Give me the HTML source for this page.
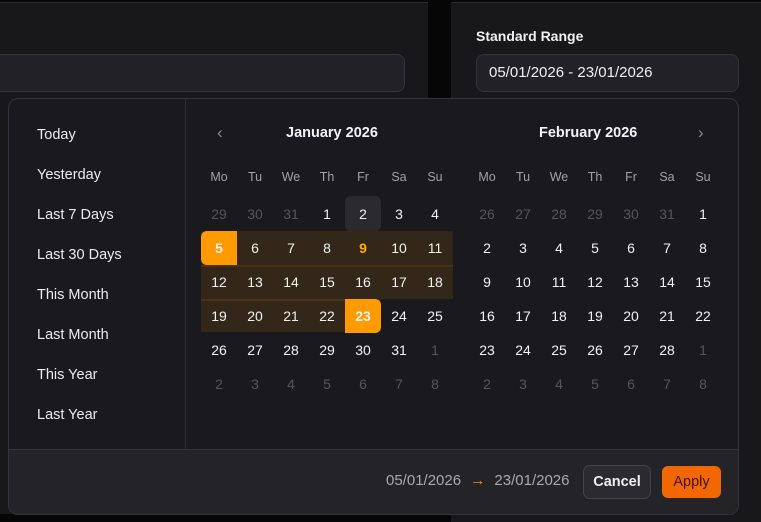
<!DOCTYPE html>
<html><head><meta charset="utf-8"><style>
*{box-sizing:border-box;margin:0;padding:0}
body{width:761px;height:522px;background:#060607;font-family:"Liberation Sans",sans-serif;position:relative;overflow:hidden;color:#f2f2f3}
.card{position:absolute;background:#18181b;border-top:1px solid #2a2a2e}
.inp{position:absolute;background:#212126;border:1px solid #34343a;border-radius:8px;height:38px;font-size:15px;line-height:36px;padding-left:12px;color:#f0f0f0}
.pop{position:absolute;left:8px;top:98px;width:731px;height:417px;background:#1a1a1e;border:1px solid #34343a;border-radius:10px;overflow:hidden}
.side{position:absolute;left:0;top:0;width:177px;height:350px;border-right:1px solid #2f2f35}
.side div{position:absolute;left:28px;font-size:14.5px;color:#ececee}
.foot{position:absolute;left:0;top:350px;width:100%;height:67px;background:#232328;border-top:1px solid #34343a}
.g{position:absolute;top:0;left:0}
.c{position:absolute;width:36px;height:34px;line-height:34px;text-align:center;font-size:14px;color:#f2f2f3}
.m{color:#55555c}
.h{font-size:12.5px;color:#a0a0a8}
.t{position:absolute;font-size:14.5px;font-weight:bold;color:#f4f4f5}
</style></head><body>
<div class="card" style="left:0;top:2px;width:428px;height:512px"></div>
<div class="card" style="left:451px;top:2px;width:310px;height:520px"></div>
<div class="inp" style="left:-10px;top:54px;width:415px"></div>
<div style="position:absolute;left:476px;top:28px;font-size:14px;font-weight:bold;color:#f0f0f0">Standard Range</div>
<div class="inp" style="left:476px;top:54px;width:263px">05/01/2026 - 23/01/2026</div>
<div class="pop">
 <div class="side">
  <div style="top:28px">Today</div><div style="top:68px">Yesterday</div><div style="top:108px">Last 7 Days</div><div style="top:148px">Last 30 Days</div><div style="top:188px">This Month</div><div style="top:228px">Last Month</div><div style="top:268px">This Year</div><div style="top:308px">Last Year</div>
 </div>
 <div style="position:absolute;left:208px;top:24px;color:#8a8a92;font-size:17px">‹</div>
 <div style="position:absolute;left:689px;top:24px;color:#8a8a92;font-size:17px">›</div>
 <div class="t" style="left:277px;top:26px">January 2026</div>
 <div class="t" style="left:530px;top:26px">February 2026</div>
 <div style="position:absolute;left:192px;top:132px;width:252px;height:101px;background:#33271a"></div>
 <div style="position:absolute;left:192px;top:166px;width:252px;height:2px;background:#4a3216"></div>
 <div style="position:absolute;left:192px;top:200px;width:144px;height:2px;background:#4a3216"></div>
 <div style="position:absolute;left:372px;top:200px;width:72px;height:34px;background:#1a1a1e"></div>
 <div style="position:absolute;left:336px;top:97px;width:36px;height:35px;background:#2a2a2f;border-radius:6px"></div>
 <div style="position:absolute;left:192px;top:132px;width:36px;height:34px;background:#ff9b00;border-radius:6px 0 0 6px"></div>
 <div style="position:absolute;left:336px;top:200px;width:36px;height:34px;background:#ff9b00;border-radius:0 6px 6px 0"></div>
 <div class="g" style="left:192px;top:61px">
  <div class="c h" style="left:0;top:0">Mo</div><div class="c h" style="left:36px;top:0">Tu</div><div class="c h" style="left:72px;top:0">We</div><div class="c h" style="left:108px;top:0">Th</div><div class="c h" style="left:144px;top:0">Fr</div><div class="c h" style="left:180px;top:0">Sa</div><div class="c h" style="left:216px;top:0">Su</div>
  <div class="c m" style="left:0;top:37px">29</div><div class="c m" style="left:36px;top:37px">30</div><div class="c m" style="left:72px;top:37px">31</div><div class="c" style="left:108px;top:37px">1</div><div class="c" style="left:144px;top:37px">2</div><div class="c" style="left:180px;top:37px">3</div><div class="c" style="left:216px;top:37px">4</div>
  <div class="c" style="left:0;top:71px;font-weight:bold">5</div><div class="c" style="left:36px;top:71px">6</div><div class="c" style="left:72px;top:71px">7</div><div class="c" style="left:108px;top:71px">8</div><div class="c" style="left:144px;top:71px;color:#ffb000;font-weight:bold">9</div><div class="c" style="left:180px;top:71px">10</div><div class="c" style="left:216px;top:71px">11</div>
  <div class="c" style="left:0;top:105px">12</div><div class="c" style="left:36px;top:105px">13</div><div class="c" style="left:72px;top:105px">14</div><div class="c" style="left:108px;top:105px">15</div><div class="c" style="left:144px;top:105px">16</div><div class="c" style="left:180px;top:105px">17</div><div class="c" style="left:216px;top:105px">18</div>
  <div class="c" style="left:0;top:139px">19</div><div class="c" style="left:36px;top:139px">20</div><div class="c" style="left:72px;top:139px">21</div><div class="c" style="left:108px;top:139px">22</div><div class="c" style="left:144px;top:139px;font-weight:bold">23</div><div class="c" style="left:180px;top:139px">24</div><div class="c" style="left:216px;top:139px">25</div>
  <div class="c" style="left:0;top:173px">26</div><div class="c" style="left:36px;top:173px">27</div><div class="c" style="left:72px;top:173px">28</div><div class="c" style="left:108px;top:173px">29</div><div class="c" style="left:144px;top:173px">30</div><div class="c" style="left:180px;top:173px">31</div><div class="c m" style="left:216px;top:173px">1</div>
  <div class="c m" style="left:0;top:207px">2</div><div class="c m" style="left:36px;top:207px">3</div><div class="c m" style="left:72px;top:207px">4</div><div class="c m" style="left:108px;top:207px">5</div><div class="c m" style="left:144px;top:207px">6</div><div class="c m" style="left:180px;top:207px">7</div><div class="c m" style="left:216px;top:207px">8</div>
 </div>
 <div class="g" style="left:460px;top:61px">
  <div class="c h" style="left:0;top:0">Mo</div><div class="c h" style="left:36px;top:0">Tu</div><div class="c h" style="left:72px;top:0">We</div><div class="c h" style="left:108px;top:0">Th</div><div class="c h" style="left:144px;top:0">Fr</div><div class="c h" style="left:180px;top:0">Sa</div><div class="c h" style="left:216px;top:0">Su</div>
  <div class="c m" style="left:0;top:37px">26</div><div class="c m" style="left:36px;top:37px">27</div><div class="c m" style="left:72px;top:37px">28</div><div class="c m" style="left:108px;top:37px">29</div><div class="c m" style="left:144px;top:37px">30</div><div class="c m" style="left:180px;top:37px">31</div><div class="c" style="left:216px;top:37px">1</div>
  <div class="c" style="left:0;top:71px">2</div><div class="c" style="left:36px;top:71px">3</div><div class="c" style="left:72px;top:71px">4</div><div class="c" style="left:108px;top:71px">5</div><div class="c" style="left:144px;top:71px">6</div><div class="c" style="left:180px;top:71px">7</div><div class="c" style="left:216px;top:71px">8</div>
  <div class="c" style="left:0;top:105px">9</div><div class="c" style="left:36px;top:105px">10</div><div class="c" style="left:72px;top:105px">11</div><div class="c" style="left:108px;top:105px">12</div><div class="c" style="left:144px;top:105px">13</div><div class="c" style="left:180px;top:105px">14</div><div class="c" style="left:216px;top:105px">15</div>
  <div class="c" style="left:0;top:139px">16</div><div class="c" style="left:36px;top:139px">17</div><div class="c" style="left:72px;top:139px">18</div><div class="c" style="left:108px;top:139px">19</div><div class="c" style="left:144px;top:139px">20</div><div class="c" style="left:180px;top:139px">21</div><div class="c" style="left:216px;top:139px">22</div>
  <div class="c" style="left:0;top:173px">23</div><div class="c" style="left:36px;top:173px">24</div><div class="c" style="left:72px;top:173px">25</div><div class="c" style="left:108px;top:173px">26</div><div class="c" style="left:144px;top:173px">27</div><div class="c" style="left:180px;top:173px">28</div><div class="c m" style="left:216px;top:173px">1</div>
  <div class="c m" style="left:0;top:207px">2</div><div class="c m" style="left:36px;top:207px">3</div><div class="c m" style="left:72px;top:207px">4</div><div class="c m" style="left:108px;top:207px">5</div><div class="c m" style="left:144px;top:207px">6</div><div class="c m" style="left:180px;top:207px">7</div><div class="c m" style="left:216px;top:207px">8</div>
 </div>
 <div class="foot">
  <div style="position:absolute;left:377px;top:22px;font-size:15px;color:#a8a8b0">05/01/2026 <span style="color:#ff9500;padding:0 5px">→</span> 23/01/2026</div>
  <div style="position:absolute;left:574px;top:15px;width:68px;height:34px;border:1px solid #44444b;border-radius:7px;background:#2a2a2f;text-align:center;line-height:32px;font-size:14.5px;font-weight:bold;color:#f0f0f0">Cancel</div>
  <div style="position:absolute;left:653px;top:16px;width:59px;height:32px;border-radius:6px;background:#f26700;text-align:center;line-height:32px;font-size:14.5px;color:#3a1500">Apply</div>
 </div>
</div>
</body></html>
